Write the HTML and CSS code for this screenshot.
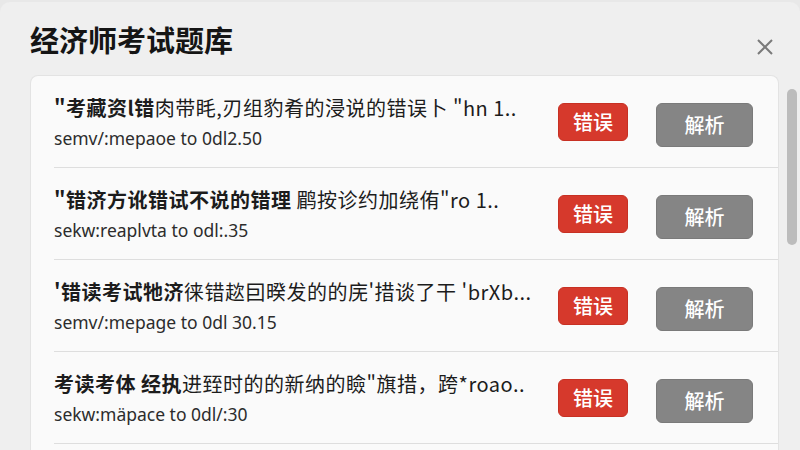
FILE: index.html
```html
<!DOCTYPE html>
<html lang="zh-CN">
<head>
    <meta charset="UTF-8">
    <title>经济师考试题库</title>
    <link rel="stylesheet" href="styles.css">
</head>
<body>
<div class="modal">
    <div class="head">
        <h1 class="title">经济师考试题库</h1>
        <svg class="close" width="18" height="18" viewBox="0 0 18 18">
            <path d="M2 2 L16 16 M16 2 L2 16" stroke="#7a7a7a" stroke-width="2" fill="none"/>
        </svg>
    </div>
    <div class="body">
        <div class="card">
            <div class="row">
                <div class="info">
                    <p class="q"><b>"考藏资l错</b>肉带眊,刃组豹肴的浸说的错误卜 "hn 1..</p>
                    <p class="meta">semv/:mepaoe to 0dl2.50</p>
                </div>
                <span class="btn red">错误</span>
                <span class="btn gray">解析</span>
            </div>
            <div class="row">
                <div class="info">
                    <p class="q"><b>"错济方讹错试不说的错理</b> 鹛按诊约加绕侑"ro 1..</p>
                    <p class="meta">sekw:reaplvta to odl:.35</p>
                </div>
                <span class="btn red">错误</span>
                <span class="btn gray">解析</span>
            </div>
            <div class="row">
                <div class="info">
                    <p class="q"><b>'错读考试牠济</b>徕错趑囙暌发的的庑'措谈了干 'brXb...</p>
                    <p class="meta">semv/:mepage to 0dl 30.15</p>
                </div>
                <span class="btn red">错误</span>
                <span class="btn gray">解析</span>
            </div>
            <div class="row">
                <div class="info">
                    <p class="q"><b>考读考体 经执</b>进臸时的的新纳的瞼"旗措，跨*roao..</p>
                    <p class="meta">sekw:mäpace to 0dl/:30</p>
                </div>
                <span class="btn red">错误</span>
                <span class="btn gray">解析</span>
            </div>
        </div>
        <div class="scroll">
            <div class="thumb"></div>
        </div>
    </div>
</div>
</body>
</html>
```

FILE: styles.css
```css
*{
    margin: 0px;
    padding: 0px;
    box-sizing: border-box;
}
html,body{
    height: 100%;
    overflow: hidden;
}
body{
    background: #e8e8e8;
    font-family: "Noto Sans", "Noto Sans CJK SC", sans-serif;
}
.modal{
    height: 100%;
    background: #efefef;
    border-radius: 10px 10px 0 0;
    margin-top: 2px;
    padding-left: 30px;
}
.head{
    display: flex;
    justify-content: space-between;
    align-items: flex-start;
    padding: 16px 26px 0 0;
    height: 73px;
}
.title{
    font-family: "Noto Sans CJK SC", sans-serif;
    font-size: 29px;
    font-weight: 700;
    line-height: 42px;
    color: #151515;
}
.close{
    margin-top: 20px;
}
.body{
    display: flex;
    height: 380px;
}
.card{
    width: 749px;
    background: #fafafa;
    border: 1px solid #e3e3e3;
    border-bottom: none;
    border-radius: 8px 8px 0 0;
    padding-left: 23px;
}
.row{
    display: flex;
    align-items: center;
    height: 92px;
    border-bottom: 1px solid #dedede;
    padding-right: 25px;
}
.info{
    flex: 1;
    min-width: 0;
    white-space: nowrap;
    padding-top: 2px;
}
.q{
    font-family: "Noto Sans CJK SC", sans-serif;
    font-size: 20px;
    letter-spacing: 0.5px;
    line-height: 31px;
    color: #1c1c1c;
}
.q b{
    font-weight: 700;
}
.meta{
    font-size: 17.5px;
    line-height: 31px;
    color: #2c2c2c;
}
.btn{
    font-family: "Noto Sans CJK SC", sans-serif;
    font-size: 20px;
    color: #fff;
    font-weight: 500;
    text-align: center;
    border-radius: 6px;
}
.red{
    width: 70px;
    height: 38px;
    line-height: 36px;
    background: #d6392c;
    border: 1px solid #c73023;
    margin-left: 16px;
}
.gray{
    width: 97px;
    height: 44px;
    line-height: 42px;
    background: #858585;
    border: 1px solid #7a7a7a;
    margin-left: 28px;
    margin-top: 6px;
}
.scroll{
    width: 21px;
    padding: 14px 3px 0 8px;
}
.thumb{
    width: 10px;
    height: 156px;
    background: #bcbcbc;
    border-radius: 5px;
}
```
